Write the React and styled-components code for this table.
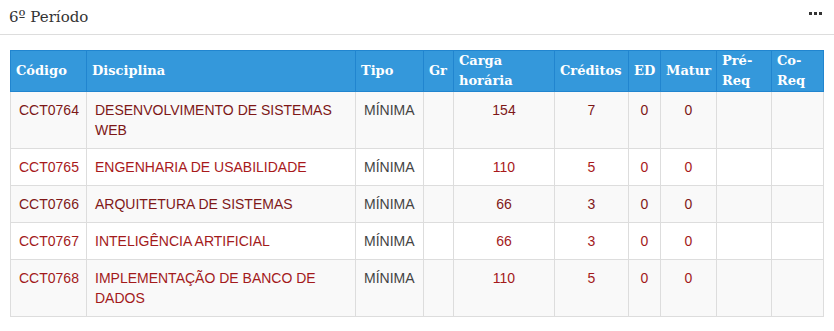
import React from 'react'
import styled, { createGlobalStyle } from 'styled-components'

const GlobalStyle = createGlobalStyle`
  body {
    margin: 0;
    background: #fff;
    font-family: "Liberation Sans", Arial, sans-serif;
  }
`

const Panel = styled.section`
  width: 834px;
`

const PanelHeader = styled.header`
  display: flex;
  justify-content: space-between;
  align-items: center;
  height: 35px;
  padding: 0 12px 0 9px;
  box-sizing: border-box;
  border-bottom: 1px solid #ddd;
`

const Title = styled.h3`
  margin: 0;
  font-family: "DejaVu Serif", serif;
  font-size: 15px;
  font-weight: 400;
  line-height: 20px;
  color: #333;
`

const Dots = styled.span`
  display: flex;
  gap: 2px;
  margin-top: -8px;

  i {
    display: block;
    width: 3px;
    height: 3px;
    background: #333;
  }
`

const Body = styled.div`
  padding: 15px 11px 0 10px;
`

const Table = styled.table`
  width: 813px;
  table-layout: fixed;
  border-collapse: collapse;
  font-size: 14px;
  line-height: 20px;
`

const Col = styled.col`
  width: ${p => p.$w}px;
`

const Th = styled.th`
  padding: 0 5px;
  background: #3498db;
  border: 1px solid #2185cf;
  color: #fff;
  font-family: "DejaVu Serif", serif;
  font-size: 13px;
  font-weight: 700;
  text-align: left;
  vertical-align: middle;
  line-height: 20px;
`

const Row = styled.tr`
  background: ${p => (p.$striped ? '#f9f9f9' : '#fff')};
  color: ${p => p.$tone};
`

const Td = styled.td`
  padding: 8px;
  border: 1px solid #ddd;
  vertical-align: top;
  text-align: ${p => (p.$center ? 'center' : 'left')};
  color: ${p => (p.$plain ? '#444' : 'inherit')};
`

const columns = [
  { label: 'Código', w: 76 },
  { label: 'Disciplina', w: 269 },
  { label: 'Tipo', w: 68 },
  { label: 'Gr', w: 30 },
  { label: 'Carga horária', w: 101 },
  { label: 'Créditos', w: 74 },
  { label: 'ED', w: 32 },
  { label: 'Matur', w: 56 },
  { label: 'Pré-Req', w: 55 },
  { label: 'Co-Req', w: 52 },
]

const rows = [
  { code: 'CCT0764', name: 'DESENVOLVIMENTO DE SISTEMAS WEB', hours: 154, credits: 7, tone: '#7d1717' },
  { code: 'CCT0765', name: 'ENGENHARIA DE USABILIDADE', hours: 110, credits: 5, tone: '#a8191b' },
  { code: 'CCT0766', name: 'ARQUITETURA DE SISTEMAS', hours: 66, credits: 3, tone: '#801818' },
  { code: 'CCT0767', name: 'INTELIGÊNCIA ARTIFICIAL', hours: 66, credits: 3, tone: '#a31a1b' },
  { code: 'CCT0768', name: 'IMPLEMENTAÇÃO DE BANCO DE DADOS', hours: 110, credits: 5, tone: '#a31a1b' },
]

export default function App() {
  return (
    <Panel>
      <GlobalStyle />
      <PanelHeader>
        <Title>6º Período</Title>
        <Dots aria-label="mais opções">
          <i />
          <i />
          <i />
        </Dots>
      </PanelHeader>
      <Body>
        <Table>
          <colgroup>
            {columns.map(c => (
              <Col key={c.label} $w={c.w} />
            ))}
          </colgroup>
          <thead>
            <tr>
              {columns.map(c => (
                <Th key={c.label}>{c.label}</Th>
              ))}
            </tr>
          </thead>
          <tbody>
            {rows.map((r, i) => (
              <Row key={r.code} $striped={i % 2 === 0} $tone={r.tone}>
                <Td>{r.code}</Td>
                <Td>{r.name}</Td>
                <Td $plain>MÍNIMA</Td>
                <Td />
                <Td $center>{r.hours}</Td>
                <Td $center>{r.credits}</Td>
                <Td $center>0</Td>
                <Td $center>0</Td>
                <Td />
                <Td />
              </Row>
            ))}
          </tbody>
        </Table>
      </Body>
    </Panel>
  )
}
